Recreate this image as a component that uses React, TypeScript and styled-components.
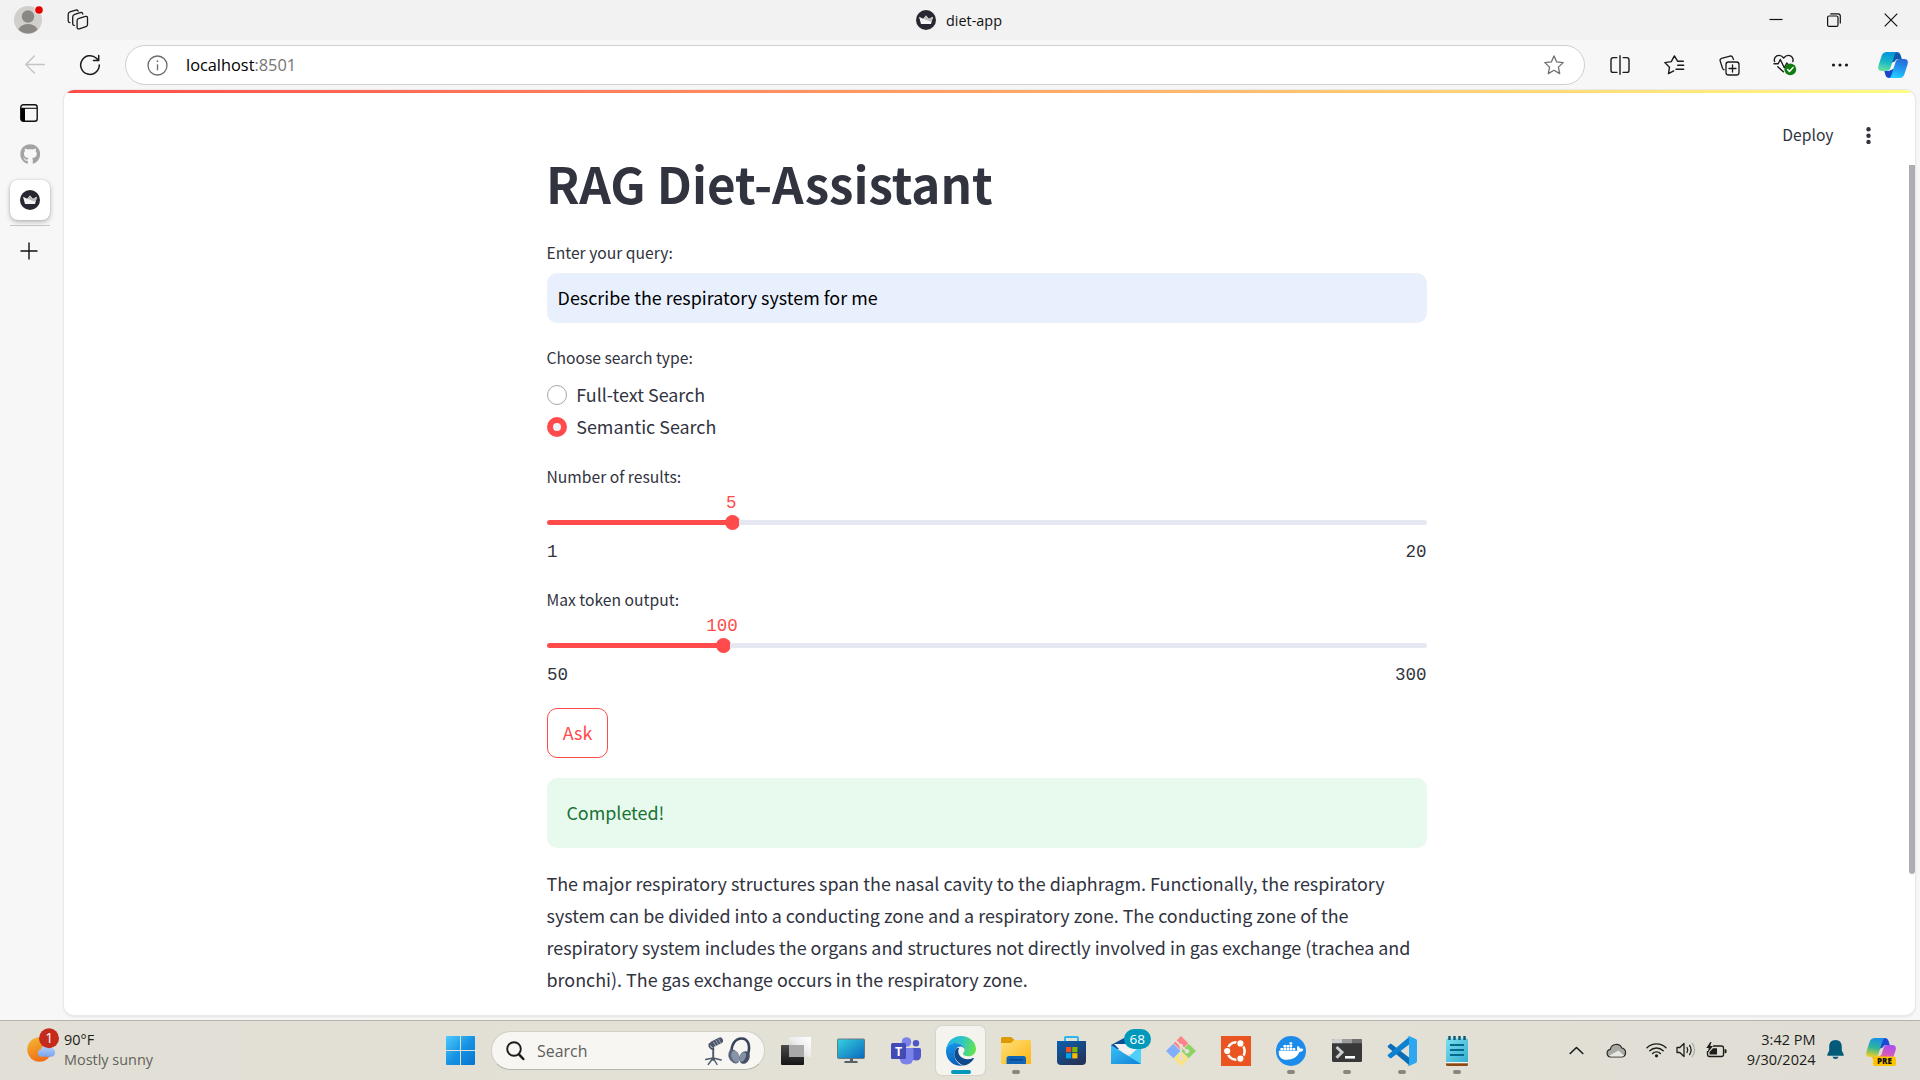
import React from 'react';
import styled, { createGlobalStyle } from 'styled-components';
import { FaGithub, FaDocker } from 'react-icons/fa';

const sans = '"Noto Sans CJK SC", "Open Sans", sans-serif';
const ui = '"Open Sans", "Noto Sans", sans-serif';
const mono = '"Liberation Mono", monospace';
const primary = '#ff4b4b';
const ink = '#31333f';

const GlobalStyle = createGlobalStyle`
  *, *::before, *::after { box-sizing: border-box; }
  body { margin: 0; background: #f7f7f7; overflow: hidden; }
  svg { display: block; flex: none; }
`;

/* ---------- Window frame ---------- */

const Screen = styled.div`
  width: 1920px;
  height: 1080px;
  display: flex;
  flex-direction: column;
  background: #f7f7f7;
  font-family: ${ui};
`;

const TitleBar = styled.header`
  height: 40px;
  display: grid;
  grid-template-columns: 1fr auto 1fr;
  align-items: center;
  background: #f2f2f2;
`;

const TitleLeft = styled.div`
  display: flex;
  align-items: center;
  gap: 22px;
  padding-left: 13px;
`;

const TabTitle = styled.div`
  display: flex;
  align-items: center;
  gap: 10px;
  padding-right: 2px;
  font-size: 14.4px;
  line-height: 20px;
  color: #111;
`;

const TabName = styled.span`
  padding-top: 1px;
`;

const WindowControls = styled.div`
  display: flex;
  justify-content: flex-end;
`;

const WindowButton = styled.div`
  width: 57.5px;
  height: 40px;
  display: flex;
  align-items: center;
  justify-content: center;
`;

const Toolbar = styled.div`
  height: 50px;
  display: flex;
  align-items: center;
  padding: 0 2px 0 6px;
`;

const ToolButton = styled.div<{ $w?: number }>`
  width: ${(p) => p.$w ?? 55.2}px;
  height: 40px;
  flex: none;
  display: flex;
  align-items: center;
  justify-content: center;
`;

const AddressBar = styled.div`
  width: 1460px;
  height: 40px;
  flex: none;
  margin: 0 7px 0 8px;
  display: flex;
  align-items: center;
  border: 1px solid #cfcfcf;
  border-radius: 20px;
  background: #fff;
  padding: 0 20px 0 21px;
`;

const Url = styled.span`
  flex: 1;
  margin-left: 18px;
  font-size: 16.35px;
  line-height: 24px;
  padding-bottom: 1px;
  color: #000;
`;

const Port = styled.span`
  color: #767676;
`;

const Body = styled.div`
  height: 930px;
  display: flex;
`;

const Rail = styled.nav`
  width: 64px;
  flex: none;
  display: flex;
  flex-direction: column;
  padding: 13px 14px 0 10px;
`;

const RailItem = styled.div<{ $active?: boolean; $h: number; $shift?: number; $drop?: number }>`
  height: ${(p) => p.$h}px;
  display: flex;
  align-items: center;
  justify-content: center;
  padding-right: ${(p) => p.$shift ?? 0}px;
  padding-top: ${(p) => p.$drop ?? 0}px;
  border-radius: 8px;
  background: ${(p) => (p.$active ? '#fff' : 'transparent')};
  box-shadow: ${(p) => (p.$active ? '0 2px 5px rgba(0,0,0,.25), 0 0 2px rgba(0,0,0,.15)' : 'none')};
`;

const RailLine = styled.div`
  height: 1px;
  margin: 5px 0 5px;
  background: #c6c6c6;
`;

/* ---------- Streamlit page ---------- */

const Page = styled.main`
  width: 1851px;
  height: 925px;
  overflow: hidden;
  border-radius: 10px;
  background: #fff;
`;

const PageShadow = styled.div`
  width: 1851px;
  height: 925px;
  border-radius: 10px;
  box-shadow: 0 0 0 1px #e9e9e9, 0 1px 2px 1px rgba(0, 0, 0, 0.08);
`;

const Decoration = styled.div`
  height: 3px;
  background: linear-gradient(90deg, #ff4b4b, #fffd80);
`;

const Scroll = styled.div`
  display: flex;
  height: 922px;
`;

const Content = styled.div`
  flex: 1;
  padding-left: 1px;
`;

const ScrollTrack = styled.div`
  width: 6px;
  padding-top: 72px;
`;

const ScrollThumb = styled.div`
  height: 709px;
  border-radius: 0 0 3px 3px;
  background: #aeaeb2;
`;

const AppHeader = styled.div`
  height: 56px;
  display: flex;
  align-items: flex-start;
  justify-content: flex-end;
  gap: 32.5px;
  padding: 31px 38px 0 0;
  font: 400 15.66px/22px ${sans};
  color: ${ink};
`;

const Column = styled.div`
  width: 880px;
  margin: 0 auto;
  display: flex;
  flex-direction: column;
  color: ${ink};
  font-family: ${sans};
`;

const Heading = styled.h1`
  margin: 0 0 26px;
  font-size: 49.3px;
  line-height: 67px;
  font-weight: 700;
  text-indent: -1px;
`;

const Label = styled.div`
  font-size: 15.66px;
  line-height: 22px;
  height: 20px;
  text-indent: -0.5px;
`;

const QueryField = styled.div`
  height: 50px;
  margin: 11px 0 24px;
  padding: 0 9.6px;
  border: 1px solid #ecf1fa;
  border-radius: 10px;
  background: #e8f0fe;
  color: #000;
  font-size: 17.9px;
  line-height: 47px;
`;

const RadioGroup = styled.div`
  margin: 11px 0 24px;
`;

const RadioRow = styled.div`
  height: 32px;
  display: flex;
  gap: 9.3px;
  font-size: 17.9px;
  line-height: 32px;
`;

const RadioDot = styled.span<{ $on?: boolean }>`
  width: 20px;
  height: 20px;
  margin-top: 7px;
  border-radius: 50%;
  border: ${(p) => (p.$on ? `6.5px solid ${primary}` : '1px solid #a6a7ac')};
  background: ${(p) => (p.$on ? '#f0f2f6' : '#fff')};
`;

const SliderBox = styled.div`
  height: 76px;
  margin-bottom: 27px;
  font: 400 17.5px/20px ${mono};
`;

const SliderValue = styled.div`
  width: 60px;
  height: 20px;
  margin-top: 7px;
  text-align: center;
  color: ${primary};
`;

const SliderTrack = styled.div`
  height: 5px;
  margin: 7px 0 17px;
  display: flex;
  align-items: center;
  border-radius: 3px;
`;

const SliderThumb = styled.div`
  width: 15px;
  height: 15px;
  flex: none;
  margin-left: -7.5px;
  border-radius: 50%;
  background: ${primary};
`;

const SliderTicks = styled.div`
  display: flex;
  justify-content: space-between;
  padding-right: 0.6px;
`;

const AskButton = styled.button`
  width: 61px;
  height: 50px;
  margin: -4px 0 20px;
  padding: 0 0 3px;
  border: 1px solid ${primary};
  border-radius: 10px;
  background: #fff;
  color: ${primary};
  font: 400 17.9px/32px ${sans};
`;

const Success = styled.div`
  height: 70px;
  margin-bottom: 19px;
  padding: 18px 19.4px;
  border-radius: 10px;
  background: #e8f9ee;
  color: #177233;
  font-size: 17.9px;
  line-height: 32px;
`;

const Answer = styled.p`
  margin: 0 0 0 -0.5px;
  white-space: nowrap;
  font-size: 17.91px;
  line-height: 32px;
`;

/* ---------- Taskbar ---------- */

const TaskBar = styled.footer`
  height: 60px;
  display: flex;
  align-items: center;
  border-top: 1px solid #b4b4aa;
  background: linear-gradient(90deg, #e1dfd6, #e3e1d5 35%, #e3e1d6 70%, #dfddd4);
`;

const Weather = styled.div`
  width: 433px;
  display: flex;
  align-items: center;
  gap: 4px;
  padding: 0 0 2px 27px;
`;

const WeatherText = styled.div`
  display: flex;
  flex-direction: column;
  font-size: 14.45px;
  line-height: 20px;
  color: #1c1c1a;
`;

const Muted = styled.span`
  color: #62615c;
`;

const TaskSlot = styled.div<{ $active?: boolean }>`
  position: relative;
  width: 55.1px;
  height: 49px;
  flex: none;
  display: flex;
  align-items: center;
  justify-content: center;
  &::before {
    content: '';
    position: absolute;
    inset: 0 3px;
    border-radius: 6px;
    background: ${(p) => (p.$active ? 'rgba(255,255,255,.6)' : 'transparent')};
    box-shadow: ${(p) => (p.$active ? '0 0 1px 1px rgba(0,0,0,.06)' : 'none')};
  }
  & > svg { position: relative; }
`;

const Indicator = styled.span<{ $active?: boolean }>`
  position: absolute;
  bottom: 1px;
  width: ${(p) => (p.$active ? 20 : 8)}px;
  height: 4px;
  border-radius: 2px;
  background: ${(p) => (p.$active ? '#0099bc' : '#888680')};
`;

const MailBadge = styled.span`
  position: absolute;
  left: 25px;
  top: 3px;
  width: 27px;
  height: 20px;
  border-radius: 10px;
  background: #0099bc;
  color: #fff;
  font-size: 13.5px;
  line-height: 20px;
  text-align: center;
`;

const SearchPill = styled.div`
  width: 274px;
  height: 39px;
  flex: none;
  margin: 0 3px;
  display: flex;
  align-items: center;
  padding: 0 12px 0 14px;
  border: 1px solid #d2d0c7;
  border-bottom-color: #b5b3aa;
  border-radius: 20px;
  background: #f7f6f3;
`;

const SearchText = styled.span`
  flex: 1;
  margin-left: 12px;
  font-size: 15.9px;
  line-height: 20px;
  color: #5f5e5a;
`;

const Tray = styled.div`
  margin-left: auto;
  display: flex;
  align-items: center;
  padding: 0 24px 0 0;
`;

const TrayIcon = styled.div<{ $gap: number }>`
  margin-right: ${(p) => p.$gap}px;
  padding-bottom: 1px;
`;

const Clock = styled.div`
  width: 80px;
  margin-right: 11px;
  padding: 0 0.5px 2px 0;
  text-align: right;
  font-size: 14.5px;
  line-height: 20px;
  color: #1c1c1a;
`;

/* ---------- Icons ---------- */

const Crown = () => (
  <svg width="20" height="20" viewBox="0 0 20 20">
    <circle cx="10" cy="10" r="10" fill="#262730" />
    <path d="M3 6.8l4.200 1.900L10 5.600l2.800 3.100L17 6.800 15 14H5z" fill="#f4f4f4" />
    <path d="M10 5.600l2.800 3.100L17 6.800 15.600 12 7.200 8.700z" fill="#bdbdbd" />
  </svg>
);

const Avatar = () => (
  <svg width="32" height="32" viewBox="0 0 32 32">
    <defs><clipPath id="av"><circle cx="15" cy="16" r="13.500" /></clipPath></defs>
    <circle cx="15" cy="16" r="14" fill="#d1cfcb" />
    <g clipPath="url(#av)" fill="#8b8784">
      <circle cx="15" cy="12.500" r="6.200" />
      <ellipse cx="15" cy="27.500" rx="10" ry="7.500" />
    </g>
    <circle cx="26" cy="6" r="4.500" fill="#f2f2f2" />
    <circle cx="26" cy="6" r="3.800" fill="#e60000" />
  </svg>
);

const Workspaces = () => (
  <svg width="22" height="22" viewBox="0 0 22 22" fill="none" stroke="#1b1b1b" strokeWidth="1.300" strokeLinejoin="round" strokeLinecap="round">
    <path d="M12 9.300l6.600-1.900q1.900-.4 1.900 1.500v6.500q0 1.700-1.600 2.200l-6.500 2.200q-2.300.7-2.300-1.500v-6.800q0-1.700 1.900-2.200z" />
    <path d="M15.800 5q-.3-2-2.600-1.300L7.700 5.300Q5.700 6 5.700 7.900v6.800q0 1.700 1.600 1.700" />
    <path d="M11.200 2.200Q10.600.6 8.600 1.200L3 2.900Q1.200 3.500 1.200 5.300v6.400q0 1.700 1.700 2" />
  </svg>
);

const Back = () => (
  <svg width="20" height="20" viewBox="0 0 20 20" fill="none" stroke="#c4c4c4" strokeWidth="1.400" strokeLinecap="round" strokeLinejoin="round">
    <path d="M19.300 9.500H.8M9.300 1L.8 9.500 9.300 18" />
  </svg>
);

const Refresh = () => (
  <svg width="22" height="22" viewBox="0 0 22 22" fill="none" stroke="#1b1b1b" strokeWidth="1.500" strokeLinecap="round" strokeLinejoin="round">
    <path d="M20.300 11a9.300 9.300 0 1 1-2.900-6.700l2 1.900M19.700 1.500v5h-5.200" />
  </svg>
);

const Info = () => (
  <svg width="21" height="21" viewBox="0 0 21 21">
    <circle cx="10.500" cy="10.500" r="9.500" fill="none" stroke="#6b6b6b" strokeWidth="1.300" />
    <path d="M10.500 9.300v6" stroke="#6b6b6b" strokeWidth="1.300" />
    <circle cx="10.500" cy="6.200" r=".9" fill="#6b6b6b" />
  </svg>
);

const Star = () => (
  <svg width="20" height="20" viewBox="0 0 20 20" fill="none" stroke="#6f6f6f" strokeWidth="1.300" strokeLinejoin="round">
    <path d="M10 .9l2.700 6 6.500.7-4.800 4.500 1.300 6.500L10 15.300l-5.700 3.300 1.300-6.500L.8 7.600l6.500-.7z" />
  </svg>
);

const Split = () => (
  <svg width="20" height="20" viewBox="0 0 20 20" fill="none" stroke="#1b1b1b" strokeWidth="1.400" strokeLinecap="round">
    <path d="M6.900 2.600H3.200Q1 2.600 1 4.800v10.400q0 2.200 2.200 2.200h3.700M13.100 2.600h3.700Q19 2.600 19 4.800v10.400q0 2.200-2.200 2.200h-3.700M10 .7v18.600" />
  </svg>
);

const Favorites = () => (
  <svg width="21" height="20" viewBox="0 0 21 20" fill="none" stroke="#1b1b1b" strokeWidth="1.400" strokeLinejoin="round" strokeLinecap="round">
    <path d="M19.300 6.300h-5.600L10.400.9 7.300 6.600l-6.500 1 4.700 4.600-1 6.400 5.200-2.700M13.700 10.300h6M12 14.300h7.700" />
  </svg>
);

const Collections = () => (
  <svg width="21" height="21" viewBox="0 0 21 21" fill="none" stroke="#1b1b1b" strokeWidth="1.300" strokeLinecap="round" strokeLinejoin="round">
    <rect x="7" y="7" width="13" height="13" rx="2.500" />
    <path d="M13.500 10v7M10 13.500h7M14.500 4.500l-.8-2Q13 .6 11 1.100L2.600 3.300Q.6 4 1.200 6l2.300 7.200q.6 1.300 1.600 1.600" />
  </svg>
);

const Essentials = () => (
  <svg width="24" height="22" viewBox="0 0 24 22" fill="none" stroke="#1b1b1b" strokeWidth="1.400" strokeLinecap="round" strokeLinejoin="round">
    <path d="M1.600 7.600C.6 4.600 2.500 1.400 6 1.400c2.200 0 3.600 1.200 4.700 2.600 1.100-1.400 2.500-2.600 4.700-2.600 3.400 0 5.300 3.200 4.400 6.200M1 9.800h4.200l2.100-4.300 4 8.300 2.500-4.800 1.200 1.600M4.800 12.800l5.600 5" />
    <circle cx="17.300" cy="15.300" r="5.900" fill="#107c10" stroke="none" />
    <path d="M14.600 15.500l1.900 1.900 3.600-3.900" stroke="#fff" strokeWidth="1.500" />
  </svg>
);

const Dots = () => (
  <svg width="18" height="6" viewBox="0 0 18 6" fill="#1b1b1b">
    <circle cx="2.500" cy="3" r="1.600" /><circle cx="9" cy="3" r="1.600" /><circle cx="15.500" cy="3" r="1.600" />
  </svg>
);

const Copilot = ({ size = 30, pre = false }: { size?: number; pre?: boolean }) => {
  const k = pre ? 'p' : 'c';
  return (
    <svg width={size} height={size} viewBox="0 0 30 30">
      <defs>
        <linearGradient id={k + '1'} x1=".5" y1="0" x2=".3" y2="1">
          <stop offset="0" stopColor={pre ? '#1a8fe8' : '#0594dc'} />
          <stop offset=".5" stopColor={pre ? '#2fb59a' : '#18b5c6'} />
          <stop offset="1" stopColor={pre ? '#f2d020' : '#67e3a0'} />
        </linearGradient>
        <linearGradient id={k + '2'} x1=".7" y1="0" x2=".4" y2="1">
          <stop offset="0" stopColor={pre ? '#a94df0' : '#2a66d8'} />
          <stop offset=".6" stopColor={pre ? '#e05cb0' : '#22a0f2'} />
          <stop offset="1" stopColor={pre ? '#fc8a60' : '#1fd0ff'} />
        </linearGradient>
      </defs>
      <path d="M13 2h6q2.600 0 3.500 2.700L23.800 9H20q-2.500 0-3.300 2.500L13 13z" fill={pre ? '#1b48d8' : '#0b5aa8'} />
      <path d="M17 28h-6.500q-2.300 0-3-2.700L6.300 21H11l6-3z" fill={pre ? '#f0a030' : '#1a46c8'} />
      <path d="M8.700 2H19q-1.700.3-2.500 3L12.300 18.600Q11.500 21 9 21H4Q-1 21 .5 15.500L3.700 5.500Q5 2 8.700 2z" fill={`url(#${k}1)`} />
      <path d="M21.300 28H11q1.700-.3 2.500-3l4.200-13.500Q18.500 9 21 9h5q5 0 3.500 5.500l-3.200 10Q25 28 21.300 28z" fill={`url(#${k}2)`} />
      {pre && (
        <g>
          <rect x="7" y="20.500" width="23" height="9.500" rx="2.500" fill="#ffc400" />
          <text x="18.500" y="28.100" textAnchor="middle" fontFamily="Open Sans, sans-serif" fontWeight="800" fontSize="8" fill="#111">PRE</text>
        </g>
      )}
    </svg>
  );
};

const VerticalTabs = () => (
  <svg width="18" height="18" viewBox="0 0 18 18">
    <rect x=".8" y=".8" width="16.400" height="16.400" rx="2.500" fill="none" stroke="#111" strokeWidth="1.400" />
    <path d="M1 4.300h16" stroke="#111" strokeWidth="1.100" />
    <path d="M.8 4.300H5v12.900H3Q.8 17.200.8 15z" fill="#000" />
  </svg>
);

const Plus = () => (
  <svg width="18" height="18" viewBox="0 0 18 18" stroke="#111" strokeWidth="1.400">
    <path d="M9 .5v17M.5 9h17" />
  </svg>
);

const Kebab = () => (
  <svg width="5" height="20" viewBox="0 0 5 20" fill={ink}>
    <circle cx="2.500" cy="5.200" r="2.200" /><circle cx="2.500" cy="11.700" r="2.200" /><circle cx="2.500" cy="18" r="2.200" />
  </svg>
);

const WeatherIcon = () => (
  <svg width="33" height="36" viewBox="0 0 33 36">
    <defs>
      <linearGradient id="sun" x1=".2" y1="0" x2=".6" y2="1"><stop offset="0" stopColor="#f2b632" /><stop offset="1" stopColor="#f06a12" /></linearGradient>
      <linearGradient id="cl" x1="0" y1="0" x2="0" y2="1"><stop offset="0" stopColor="#b5d2fb" /><stop offset="1" stopColor="#7ba4ec" /></linearGradient>
    </defs>
    <circle cx="12.500" cy="16.500" r="12.200" fill="url(#sun)" transform="translate(0 1)" />
    <path d="M14 24.800a3.800 3.800 0 0 1-.4-7.400 5.300 5.300 0 0 1 9.400-1.300 4.300 4.300 0 0 1 1.500 8.700z" fill="url(#cl)" />
    <circle cx="22" cy="10.300" r="10" fill="#c42b1c" transform="translate(0 -4)" />
    <text x="22.300" y="11.300" textAnchor="middle" fontFamily="Open Sans, sans-serif" fontSize="14" fill="#fff">1</text>
  </svg>
);

const WeatherBox = styled.div`
  margin: 0 0 0 0;
  & > svg { overflow: visible; }
`;

const Start = () => (
  <svg width="29" height="29" viewBox="0 0 29 29">
    <defs><linearGradient id="win" x1="0" y1="0" x2="1" y2="1"><stop offset="0" stopColor="#4ccbfb" /><stop offset=".5" stopColor="#1793e4" /><stop offset="1" stopColor="#0673cf" /></linearGradient></defs>
    <path d="M1 0h13v13.900H0V1q0-1 1-1zM15 0h13q1 0 1 1v12.900H15zM0 15h14v14H1q-1 0-1-1zM15 15h14v13q0 1-1 1H15z" fill="url(#win)" />
  </svg>
);

const Magnifier = () => (
  <svg width="19" height="20" viewBox="0 0 19 20" fill="none" stroke="#1c1c1c" strokeLinecap="round">
    <circle cx="8" cy="8" r="6.800" strokeWidth="1.900" />
    <path d="M13 13.300l4.300 4.700" strokeWidth="2.500" />
  </svg>
);

const MicHeadphones = () => (
  <svg width="48" height="30" viewBox="0 0 48 30">
    <g fill="none" stroke="#4e586b" strokeLinecap="round">
      <path d="M9 8l7-3.500" strokeWidth="6" />
      <path d="M9.500 6l2.300 4M12 4.600l2.300 4M14.500 3.300l2.300 4" stroke="#aeb6c4" strokeWidth=".8" />
      <path d="M5.500 8q-1 4 4 5.500M9.200 12v12" strokeWidth="1.900" />
      <path d="M9.200 22l-7.500 1.500M9.200 22l-5 6.500M9.200 22l3.800 6.500M9.200 22l8 2" strokeWidth="1.400" />
      <path d="M27.500 17.500C27 9 31 2.500 37.500 2.500c7 0 9 7.500 6.500 16" stroke="#39435a" strokeWidth="2.600" />
    </g>
    <path d="M26 13.500q4-1.500 7 3t1.500 10q-4 2.500-8-2t-.5-11z" fill="#59647a" />
    <ellipse cx="31.500" cy="20.500" rx="4" ry="6" fill="#8893a8" transform="rotate(-20 31.500 20.500)" />
    <ellipse cx="40.500" cy="21.500" rx="5" ry="6.500" fill="#465169" transform="rotate(25 40.500 21.500)" />
    <ellipse cx="38.700" cy="21" rx="2.800" ry="5" fill="#8490a5" transform="rotate(25 38.700 21)" />
  </svg>
);

const TaskView = () => (
  <svg width="30" height="28" viewBox="0 0 30 28">
    <defs>
      <linearGradient id="tv" x1="0" y1="0" x2="0" y2="1"><stop offset="0" stopColor="#4a4a4a" /><stop offset="1" stopColor="#151515" /></linearGradient>
      <linearGradient id="tw" x1="0" y1="1" x2="1" y2="0"><stop offset="0" stopColor="#b9b9b9" /><stop offset=".5" stopColor="#ececec" /><stop offset="1" stopColor="#fff" /></linearGradient>
    </defs>
    <rect x="0" y="8" width="23" height="20" rx="1" fill="url(#tv)" />
    <rect x="8" y="0" width="22" height="20" rx="1" fill="url(#tw)" />
    <path d="M8 8h15v12H9q-1 0-1-1z" fill="#a9a9a9" />
  </svg>
);

const Monitor = () => (
  <svg width="28" height="25" viewBox="0 0 28 25">
    <defs><linearGradient id="mo" x1="0" y1="0" x2="1" y2="1"><stop offset="0" stopColor="#34d3e0" /><stop offset="1" stopColor="#0b66bd" /></linearGradient></defs>
    <rect x=".5" y="1" width="27" height="19.500" rx="1" fill="url(#mo)" stroke="#6c7a80" />
    <path d="M13 20.500h3v2.500h4.500v2h-13v-2H13z" fill="#596066" />
  </svg>
);

const Teams = () => (
  <svg width="30" height="28" viewBox="0 0 30 28">
    <circle cx="15.500" cy="5" r="4.800" fill="#7b83eb" />
    <circle cx="25" cy="6.200" r="3.200" fill="#4f57c6" />
    <path d="M20 11h8.500q1.500 0 1.500 1.500v6q0 5-5 5-4 0-5-3z" fill="#5059c9" />
    <path d="M9.500 11H21q1.500 0 1.500 1.500V20q0 7.500-7 7.500T8.500 20z" fill="#7b83eb" />
    <rect x="0" y="6" width="15" height="16" rx="1.500" fill="#434ab4" />
    <text x="7.500" y="18.700" textAnchor="middle" fontFamily="Open Sans, sans-serif" fontWeight="700" fontSize="12.500" fill="#fff">T</text>
  </svg>
);

const Edge = () => (
  <svg width="30" height="30" viewBox="0 0 30 30">
    <defs>
      <linearGradient id="e1" x1="0" y1=".3" x2="1" y2=".5"><stop offset="0" stopColor="#1fb0e8" /><stop offset=".5" stopColor="#2fc6c4" /><stop offset="1" stopColor="#64e34f" /></linearGradient>
      <linearGradient id="e2" x1=".3" y1="0" x2=".6" y2="1"><stop offset="0" stopColor="#1596e8" /><stop offset="1" stopColor="#0a5cb8" /></linearGradient>
    </defs>
    <path d="M0 14C.8 5.500 7.500 0 15 0c8.500 0 15 6 15 13 0 4.500-3.500 7.300-7.500 7.300-3.500 0-5.500-1.300-5.500-2.600 0-1 1.500-1.500 1.500-4.200C18.500 10 14.500 7 9.500 7 5 7 1.500 9.500 0 14z" fill="url(#e1)" />
    <path d="M0 14.500C.5 9.500 5 7 9.500 7c5 0 9 3 9 6.500-.3-1.500-1.700-3-4-3-3.500 0-6 3.500-6 8 0 6 4.500 10.500 9 11C8 31.500-.5 24 0 14.500z" fill="url(#e2)" />
    <path d="M10.700 12.300c-3 3-3.200 9.200.8 13.200 2.200 2.300 4.600 3.500 6.500 4 4-.8 7.700-3.300 9.800-6.800.4-.7-.2-1-.8-.7-6.500 3.200-14-.2-14.700-6-.2-1.600.3-3 1-4.200z" fill="#114a8b" />
  </svg>
);

const Explorer = () => (
  <svg width="30" height="27" viewBox="0 0 30 27">
    <defs><linearGradient id="fo" x1="0" y1="0" x2="1" y2="1"><stop offset="0" stopColor="#ffe07a" /><stop offset="1" stopColor="#fbb615" /></linearGradient></defs>
    <path d="M0 1.500Q0 0 1.500 0h8q1 0 1.700.8L13.500 3H27v5H0z" fill="#dc9a05" />
    <path d="M0 6h10l3-3h15.500Q30 3 30 4.500V27H1.500Q0 27 0 25.500z" fill="url(#fo)" />
    <path d="M5.500 27v-5.500q0-2.500 2.500-2.500h14.500Q25 19 25 21.500V27z" fill="#0f66b8" />
    <path d="M8.500 22.800H22" stroke="#0a3f82" strokeWidth="1.200" />
  </svg>
);

const Store = () => (
  <svg width="29" height="29" viewBox="0 0 29 29">
    <defs><linearGradient id="st" x1="0" y1="0" x2=".7" y2="1"><stop offset="0" stopColor="#0a60b0" /><stop offset="1" stopColor="#243358" /></linearGradient></defs>
    <path d="M8 6V2q0-1 1-1h11q1 0 1 1v4" fill="none" stroke="#2bb5ee" strokeWidth="1.900" />
    <path d="M0 5h29v20q0 4-4 4H4q-4 0-4-4z" fill="url(#st)" />
    <path fill="#f25022" d="M9 11h5.200v5.200H9z" /><path fill="#7fba00" d="M15.200 11h5.200v5.200h-5.200z" />
    <path fill="#00a4ef" d="M9 17.200h5.200v5.200H9z" /><path fill="#ffb900" d="M15.200 17.200h5.200v5.200h-5.200z" />
  </svg>
);

const Mail = () => (
  <svg width="30" height="27" viewBox="0 0 30 27">
    <defs><linearGradient id="ml" x1="0" y1="0" x2="1" y2="1"><stop offset="0" stopColor="#38c5f7" /><stop offset="1" stopColor="#127fd6" /></linearGradient></defs>
    <path d="M0 8L15 0l15 8v4H0z" fill="#0c4f94" />
    <path d="M3 7h24v10H13z" fill="#f1f1f1" />
    <path d="M30 8v19H10z" fill="#4fd0fb" />
    <path d="M0 8l30 19H0z" fill="url(#ml)" />
  </svg>
);

const Git = () => (
  <svg width="30" height="30" viewBox="0 0 30 30">
    <path d="M15 0l7.300 7.300L15 14.600 7.700 7.300z" fill="#ff8286" />
    <path d="M22.700 7.700L30 15l-7.300 7.300-7.300-7.300z" fill="#8fd366" />
    <path d="M15 15.400l7.300 7.300L15 30l-7.300-7.300z" fill="#fee27e" />
    <path d="M7.300 7.700l7.300 7.300-7.300 7.300L0 15z" fill="#82affc" />
    <g fill="none" stroke="#e3e1d6" strokeWidth="1.800"><path d="M9.500 4.500l11.500 11M15 10v13" /></g>
    <g fill="#e3e1d6"><circle cx="15" cy="9.700" r="2" /><circle cx="21" cy="15.300" r="2.200" /><circle cx="15" cy="22.500" r="2.200" /></g>
  </svg>
);

const Ubuntu = () => (
  <svg width="30" height="30" viewBox="0 0 30 30">
    <path d="M0 0h30v30H0z" fill="#e95420" />
    <circle cx="15" cy="15" r="8.700" fill="none" stroke="#fff" strokeWidth="2.600" />
    {[180, 300, 60].map((a) => (
      <circle key={a} cx={15 + 8.8 * Math.cos((a * Math.PI) / 180)} cy={15 + 8.8 * Math.sin((a * Math.PI) / 180)} r="3.700" fill="#fff" stroke="#e95420" strokeWidth="1.200" />
    ))}
  </svg>
);

const Docker = () => (
  <svg width="30" height="30" viewBox="0 0 30 30">
    <circle cx="15" cy="15" r="15" fill="#1d8bea" />
    <FaDocker x={2.5} y={2.5} width={25} height={25} size={25} color="#fff" />
  </svg>
);

const Terminal = () => (
  <svg width="30" height="23" viewBox="0 0 30 23">
    <rect width="30" height="23" rx="1.500" fill="#383838" />
    <path d="M0 4.300V1.500Q0 0 1.500 0H10v4.300z" fill="#cfcfcf" />
    <path d="M10 0h10v4.300H10z" fill="#9b9b9b" />
    <path d="M20 0h8.500Q30 0 30 1.500v2.800H20z" fill="#6f6f6f" />
    <path d="M4.500 8l5.500 5.200L4.500 18.700" fill="none" stroke="#ccc" strokeWidth="3" />
    <path d="M13 18.300h10" stroke="#fff" strokeWidth="2.600" />
  </svg>
);

const VsCode = () => (
  <svg width="30" height="30" viewBox="0 0 30 30">
    <path d="M1 9.800l2-1.900q.7-.6 1.500 0L22 21.500V29L.9 11.300q-.7-.8.100-1.500z" fill="#0a6db5" />
    <path d="M1 20.200l2 1.900q.7.6 1.500 0L22 8.500V1L.9 18.700q-.7.8.100 1.500z" fill="#0c82d0" />
    <path d="M22 0l6.800 3Q30 3.500 30 5v20q0 1.500-1.200 2L22 30q-1 .2-1.800-.8 1.800 1 1.800-1V1.800q0-2-1.800-1Q21-.2 22 0z" fill="#2ea7f0" />
  </svg>
);

const Notepad = () => (
  <svg width="22" height="30" viewBox="0 0 22 30">
    <defs><linearGradient id="np" x1="0" y1="0" x2="1" y2="1"><stop offset="0" stopColor="#79dff0" /><stop offset="1" stopColor="#35aecf" /></linearGradient></defs>
    <path d="M0 25h22v3.500q0 1.500-1.500 1.500h-19Q0 30 0 28.500z" fill="#8c4a12" />
    <path d="M0 24h22v3.300H0z" fill="#f4f4f4" />
    <path d="M0 4q0-1.500 1.500-1.500h19Q22 2.500 22 4v22H0z" fill="url(#np)" />
    <path d="M4 9h14M4 14h14M4 19h14" stroke="#08698e" strokeWidth="1.900" />
    <path d="M3.500 0v4M8.500 0v4M13.500 0v4M18.500 0v4" stroke="#0b5875" strokeWidth="2.400" />
  </svg>
);

const Chevron = () => (
  <svg width="15" height="9" viewBox="0 0 15 9" fill="none" stroke="#1c1c1a" strokeWidth="1.600" strokeLinecap="round" strokeLinejoin="round"><path d="M1.200 7.500l6.300-6 6.300 6" /></svg>
);

const OneDrive = () => (
  <svg width="21" height="15" viewBox="0 0 21 15">
    <path d="M4.500 14a3.900 3.900 0 0 1-.2-7.700A6.100 6.100 0 0 1 15.800 5 4.600 4.600 0 0 1 16 14z" fill="#a9a9a6" stroke="#2a2a28" strokeWidth="1.200" />
    <path d="M3 12.800l9.500-5.300 5.700 5.200q-1 .7-2.200.7H4.500z" fill="#e6e6e3" />
  </svg>
);

const Wifi = () => (
  <svg width="21" height="16" viewBox="0 0 21 16" fill="none" stroke="#1c1c1a" strokeWidth="1.400" strokeLinecap="round">
    <path d="M1 5.800a13.500 13.500 0 0 1 19 0M3.800 8.800a9.500 9.500 0 0 1 13.400 0M6.600 11.500a5.500 5.500 0 0 1 7.800 0" />
    <circle cx="10.500" cy="13.800" r="1.600" fill="#1c1c1a" stroke="none" />
  </svg>
);

const Speaker = () => (
  <svg width="21" height="16" viewBox="0 0 21 16" fill="none" stroke="#1c1c1a" strokeWidth="1.300" strokeLinecap="round" strokeLinejoin="round">
    <path d="M1 5.500h2.800L8 1.500v13l-4.200-4H1zM11 5.500q1.500 2.500 0 5M13.600 3.400q3 4.600 0 9.200" />
    <path d="M16.300 1.400q4.500 6.600 0 13.200" stroke="#aeaca4" />
  </svg>
);

const Battery = () => (
  <svg width="21" height="17" viewBox="0 0 21 17">
    <path d="M7 4h8.500q2 0 2 2v6.500q0 2-2 2h-12q-2 0-2-2V9" fill="none" stroke="#1c1c1a" strokeWidth="1.300" />
    <path d="M18.500 7.200h1q1 0 1 1v2q0 1-1 1h-1z" fill="#1c1c1a" />
    <path d="M7 6.200h4v6.200H3.500V10z" fill="#1c1c1a" />
    <path d="M4.300 0L.3 6h2.500L1.500 11 7 4H4.200L5.500 0z" fill="#1c1c1a" />
  </svg>
);

const Bell = () => (
  <svg width="17" height="20" viewBox="0 0 17 20" fill="#045a78">
    <path d="M8.500 0c4 0 6.300 2.800 6.300 6.500v4l2 4.200q.3 1-.7 1H.9q-1 0-.7-1l2-4.200v-4C2.200 2.800 4.500 0 8.500 0zM5.500 16.800h6q-.5 2.200-3 2.200t-3-2.200z" />
  </svg>
);

/* ---------- Composition ---------- */

const TrackFill = styled.div`
  height: 5px;
  flex: none;
  border-radius: 3px 0 0 3px;
  background: ${primary};
`;

const TrackRest = styled.div`
  height: 5px;
  flex: 1;
  margin-left: -1px;
  border-radius: 0 3px 3px 0;
  background: #e5e8f0;
`;

interface SliderProps { label: string; min: number; max: number; value: number }

const Slider = ({ label, min, max, value }: SliderProps) => {
  const at = ((value - min) / (max - min)) * 880;
  return (
    <>
      <Label>{label}</Label>
      <SliderBox>
        <SliderValue style={{ marginLeft: at - 31 }}>{value}</SliderValue>
        <SliderTrack>
          <TrackFill style={{ width: at }} />
          <SliderThumb />
          <TrackRest />
        </SliderTrack>
        <SliderTicks><span>{min}</span><span>{max}</span></SliderTicks>
      </SliderBox>
    </>
  );
};

const apps: { icon: React.ReactNode; active?: boolean; open?: boolean; badge?: string }[] = [
  { icon: <TaskView /> },
  { icon: <Monitor /> },
  { icon: <Teams /> },
  { icon: <Edge />, active: true, open: true },
  { icon: <Explorer />, open: true },
  { icon: <Store /> },
  { icon: <Mail />, badge: '68' },
  { icon: <Git /> },
  { icon: <Ubuntu /> },
  { icon: <Docker />, open: true },
  { icon: <Terminal />, open: true },
  { icon: <VsCode />, open: true },
  { icon: <Notepad />, open: true },
];

export default function App() {
  return (
    <Screen>
      <GlobalStyle />
      <TitleBar>
        <TitleLeft><Avatar /><Workspaces /></TitleLeft>
        <TabTitle><Crown /><TabName>diet-app</TabName></TabTitle>
        <WindowControls>
          <WindowButton><svg width="14" height="14"><path d="M.5 6.500h13" stroke="#111" strokeWidth="1.200" /></svg></WindowButton>
          <WindowButton>
            <svg width="14" height="14" fill="none" stroke="#111" strokeWidth="1.200">
              <rect x=".6" y="3" width="10.400" height="10.400" rx="1.500" />
              <path d="M3.300 .8H11q2.300 0 2.300 2.300v7.500" />
            </svg>
          </WindowButton>
          <WindowButton><svg width="14" height="14" stroke="#111" strokeWidth="1.200"><path d="M.7.7l12.600 12.600M13.300.7L.7 13.300" /></svg></WindowButton>
        </WindowControls>
      </TitleBar>

      <Toolbar>
        <ToolButton $w={57}><Back /></ToolButton>
        <ToolButton $w={54}><Refresh /></ToolButton>
        <AddressBar>
          <Info />
          <Url>localhost<Port>:8501</Port></Url>
          <Star />
        </AddressBar>
        <ToolButton><Split /></ToolButton>
        <ToolButton><Favorites /></ToolButton>
        <ToolButton><Collections /></ToolButton>
        <ToolButton><Essentials /></ToolButton>
        <ToolButton><Dots /></ToolButton>
        <ToolButton $w={50}><Copilot /></ToolButton>
      </Toolbar>

      <Body>
        <Rail>
          <RailItem $h={19} $shift={2}><VerticalTabs /></RailItem>
          <RailItem $h={58} $drop={7}><FaGithub size={20.5} color="#a3a3a6" /></RailItem>
          <RailItem $h={40} $active><Crown /></RailItem>
          <RailLine />
          <RailItem $h={40} $shift={2}><Plus /></RailItem>
        </Rail>
        <PageShadow>
          <Page>
            <Decoration />
            <Scroll>
              <Content>
                <AppHeader><span>Deploy</span><Kebab /></AppHeader>
                <Column>
                  <Heading>RAG Diet-Assistant</Heading>
                  <Label>Enter your query:</Label>
                  <QueryField>Describe the respiratory system for me</QueryField>
                  <Label>Choose search type:</Label>
                  <RadioGroup>
                    <RadioRow><RadioDot />Full-text Search</RadioRow>
                    <RadioRow><RadioDot $on />Semantic Search</RadioRow>
                  </RadioGroup>
                  <Slider label="Number of results:" min={1} max={20} value={5} />
                  <Slider label="Max token output:" min={50} max={300} value={100} />
                  <AskButton>Ask</AskButton>
                  <Success>Completed!</Success>
                  <Answer>
                    The major respiratory structures span the nasal cavity to the diaphragm. Functionally, the respiratory<br />
                    system can be divided into a conducting zone and a respiratory zone. The conducting zone of the<br />
                    respiratory system includes the organs and structures not directly involved in gas exchange (trachea and<br />
                    bronchi). The gas exchange occurs in the respiratory zone.
                  </Answer>
                </Column>
              </Content>
              <ScrollTrack><ScrollThumb /></ScrollTrack>
            </Scroll>
          </Page>
        </PageShadow>
      </Body>

      <TaskBar>
        <Weather>
          <WeatherBox><WeatherIcon /></WeatherBox>
          <WeatherText><span>90°F</span><Muted>Mostly sunny</Muted></WeatherText>
        </Weather>
        <TaskSlot><Start /></TaskSlot>
        <SearchPill>
          <Magnifier />
          <SearchText>Search</SearchText>
          <MicHeadphones />
        </SearchPill>
        {apps.map((a, i) => (
          <TaskSlot key={i} $active={a.active}>
            {a.icon}
            {a.badge && <MailBadge>{a.badge}</MailBadge>}
            {a.open && <Indicator $active={a.active} />}
          </TaskSlot>
        ))}
        <Tray>
          <TrayIcon $gap={22}><Chevron /></TrayIcon>
          <TrayIcon $gap={19}><OneDrive /></TrayIcon>
          <TrayIcon $gap={9}><Wifi /></TrayIcon>
          <TrayIcon $gap={9}><Speaker /></TrayIcon>
          <TrayIcon $gap={9}><Battery /></TrayIcon>
          <Clock>3:42 PM<br />9/30/2024</Clock>
          <TrayIcon $gap={22}><Bell /></TrayIcon>
          <Copilot pre size={30} />
        </Tray>
      </TaskBar>
    </Screen>
  );
}
